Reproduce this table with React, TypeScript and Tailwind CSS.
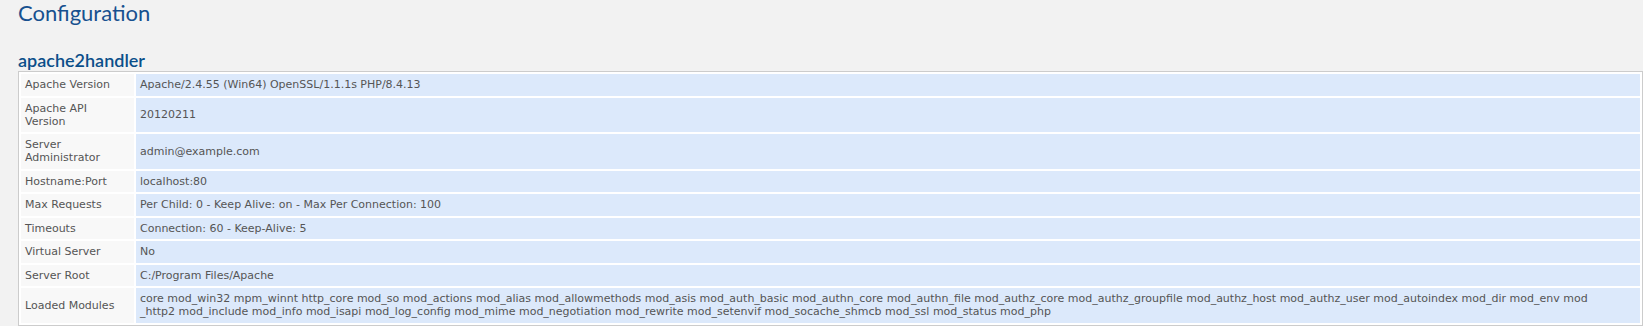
import React from "react";

const rows: { label: string; value: React.ReactNode }[] = [
  { label: "Apache Version", value: "Apache/2.4.55 (Win64) OpenSSL/1.1.1s PHP/8.4.13" },
  { label: "Apache API Version", value: "20120211" },
  { label: "Server Administrator", value: "admin@example.com" },
  { label: "Hostname:Port", value: "localhost:80" },
  { label: "Max Requests", value: "Per Child: 0 - Keep Alive: on - Max Per Connection: 100" },
  { label: "Timeouts", value: "Connection: 60 - Keep-Alive: 5" },
  { label: "Virtual Server", value: "No" },
  { label: "Server Root", value: "C:/Program Files/Apache" },
  {
    label: "Loaded Modules",
    value: (
      <>
        <span className="whitespace-nowrap">
          core mod_win32 mpm_winnt http_core mod_so mod_actions mod_alias mod_allowmethods mod_asis mod_auth_basic mod_authn_core mod_authn_file mod_authz_core mod_authz_groupfile mod_authz_host mod_authz_user mod_autoindex mod_dir mod_env mod
        </span>
        <br />
        <span className="whitespace-nowrap">
          _http2 mod_include mod_info mod_isapi mod_log_config mod_mime mod_negotiation mod_rewrite mod_setenvif mod_socache_shmcb mod_ssl mod_status mod_php
        </span>
      </>
    ),
  },
];

export default function App() {
  return (
    <div className="min-h-[326px] bg-[#f2f2f2] pl-[18px] overflow-hidden">
      <h1 className="text-[22px] leading-[26px] text-[#17508f] font-normal font-['Lato',sans-serif]">
        Configuration
      </h1>
      <h2 className="mt-[23px] text-[18px] leading-[22px] text-[#0b4f8a] font-semibold font-['Lato',sans-serif]">
        apache2handler
      </h2>
      <table className="w-full table-fixed border-separate border-spacing-[2px] border border-[#cccccc] bg-white font-['DejaVu_Sans',sans-serif] text-[11px] leading-[13px] text-[#555555]">
        <colgroup>
          <col className="w-[113px]" />
          <col />
        </colgroup>
        <tbody>
          {rows.map((r) => (
            <tr key={r.label}>
              <td className="bg-[#f8f8f8] px-[4px] py-[4.25px] align-middle">{r.label}</td>
              <td className="bg-[#dce9fb] px-[4px] py-[4.25px] align-middle">{r.value}</td>
            </tr>
          ))}
        </tbody>
      </table>
    </div>
  );
}
